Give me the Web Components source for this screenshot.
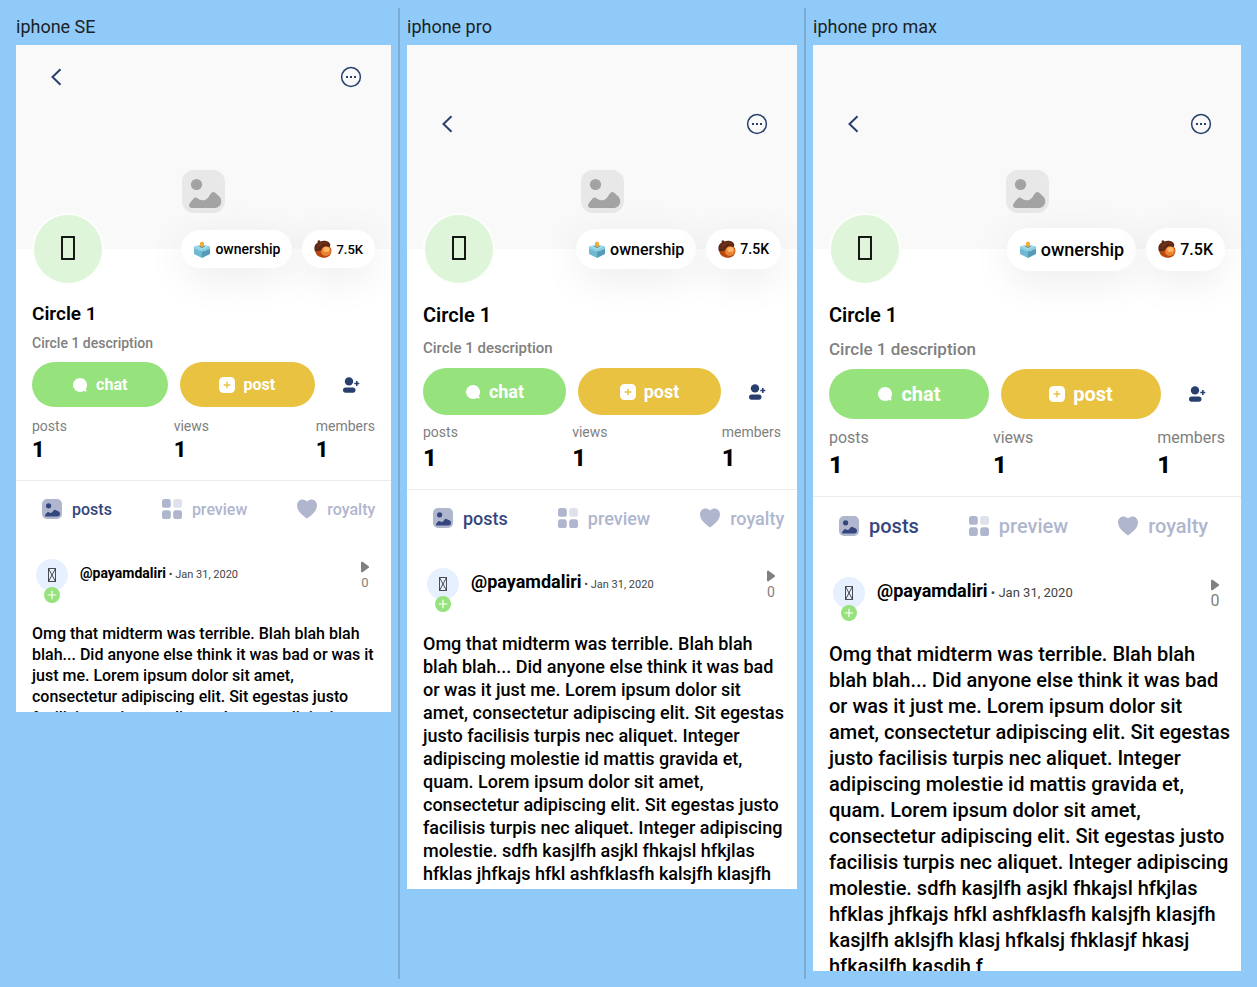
<!DOCTYPE html>
<html lang="en">
<head>
<meta charset="utf-8">
<meta name="viewport" content="width=device-width, initial-scale=1">
<title>Circle device previews</title>
<style>
  body { margin: 0; padding: 8px; background: #90caf9; font-family: Roboto, "Noto Sans", sans-serif; }
</style>
</head>
<body>
<device-board>
  <device-preview size="se" label="iphone SE"><circle-screen></circle-screen></device-preview>
  <device-preview size="pro" label="iphone pro"><circle-screen></circle-screen></device-preview>
  <device-preview size="max" label="iphone pro max"><circle-screen></circle-screen></device-preview>
</device-board>

<script>
const define = (name, html) => {
  const template = document.createElement('template');
  template.innerHTML = html;
  customElements.define(name, class extends HTMLElement {
    constructor() {
      super();
      this.attachShadow({ mode: 'open' }).append(template.content.cloneNode(true));
    }
    connectedCallback() {
      this.shadowRoot.querySelectorAll('[data-attr]').forEach(node => {
        node.textContent = this.getAttribute(node.dataset.attr) || '';
      });
      this.shadowRoot.querySelectorAll('button').forEach(node => {
        if (this.hasAttribute('label')) node.setAttribute('aria-label', this.getAttribute('label'));
      });
    }
  });
};

const ICONS = {
  back: [24, 24, '<path d="M16.500 4.300 8.500 12l8 7.700" fill="none" stroke="#29406f" stroke-width="2"/>'],
  more: [24, 24, '<circle cx="12" cy="12" r="9.400" fill="none" stroke="#29406f" stroke-width="1.500"/><path d="M7 11h2v2H7zM11 11h2v2h-2zM15 11h2v2h-2z" fill="#29406f"/>'],
  cover: [43, 43, '<rect width="43" height="43" rx="12" fill="#e8e8e8"/><circle cx="14.500" cy="14.500" r="5.600" fill="#a3a3a3"/><path d="M7 35.500c0-1.600 3.800-6.300 5.300-7.500 1.700-1.300 3 .3 4.700 1.300 2.800 1.700 6.300 1.500 9-1.600 1.600-1.900 2.400-4.100 4-5.200 1.800-1.200 3.400.3 5.500 2.500 2.500 1.600 4 4 3.700 7-.3 3.500-3 6-6.700 6H10c-2 0-3-.9-3-2.500z" fill="#a3a3a3"/>'],
  ballot: [18, 18, '<path d="m1 6.500 8-2.500 8 2.500-8 3.500z" fill="#9bdcec"/><path d="M1 6.500v7.500l8 4V10z" fill="#6fb9d0"/><path d="M17 6.500v7.500l-8 4V10z" fill="#559bb8"/><path d="M1 6.500 9 10l8-3.500v2L15 10l-1-.5-2 2-1-.7-2 1-2-1-1 .5-2-2-1 .5-2-1.300z" fill="#8bd0e3"/><path d="m6 6.400 3-1 3 1.100-3 1.300z" fill="#366477"/><path d="M7 3.300c0-2 4-2 4 0v3L9.200 7.200 7 6.200z" fill="#f0ab3e"/>'],
  acorn: [18, 18, '<path d="M2.500 8C.6 10 1.200 14.700 5 16.600c2.600 1.200 4.600 1.500 7 1 3.700-.8 5.600-3.900 5.400-7.200C17.200 6.700 14 5 11 5z" fill="#b8480f"/><ellipse cx="11.800" cy="11" rx="5" ry="4.900" fill="#ea8432"/><ellipse cx="12.400" cy="9.500" rx="3.200" ry="2.500" fill="#ffb563"/><path d="M1 11.500C-.6 7 1 4 3.800 2.600L3.500.8l2-.5 1 1.200C10-.2 15.700 1 16.200 4.700c.3 1.500-.2 2-1 2.300C11 5.200 8 7 7.300 10.500 5 10.200 2.600 11.500 1 11.500z" fill="#5c2714"/><path d="M3 6C6 3 10 2.400 13.500 3.500M3 9c1-3 3-4 5-4.500" fill="none" stroke="#8c421e" stroke-width=".7"/>'],
  chat: [16, 16, '<path d="M8 1a7 7 0 1 0 3.800 12.900l2.200.6c.6.100.8-.3.600-.8l-.7-1.900A7 7 0 0 0 8 1z" fill="#fff"/>'],
  add: [16, 16, '<path fill-rule="evenodd" d="M4.500 0h7A4.500 4.500 0 0 1 16 4.500v7a4.500 4.500 0 0 1-4.500 4.500h-7A4.500 4.500 0 0 1 0 11.500v-7A4.500 4.500 0 0 1 4.500 0zM7.300 4.700v2.600H4.700v1.400h2.600v2.600h1.400V8.700h2.600V7.300H8.700V4.700z" fill="#fff"/>'],
  follow: [18, 18, '<circle cx="7" cy="5.400" r="4.200" fill="#29406f"/><rect x="1" y="11.500" width="12.500" height="5.200" rx="2.600" fill="#29406f"/><path d="M14.800 5v5M12.300 7.500h5" stroke="#29406f" stroke-width="1.600"/>'],
  picture: [20, 20, '<rect width="20" height="20" rx="5" fill="#afb6ce"/><circle cx="6.600" cy="6.800" r="2.600" fill="#35457d"/><path d="M3 16.600c0-.9 1.900-3.100 2.800-3.600 1-.4 1.500.8 2.900.9 2.200.1 2.500-3.300 4.300-3.100.9.100 1.200 1 2 1 .9 0 2.800.8 3 2.800.2 1.800-.9 3-2.700 3H4.200c-.8 0-1.200-.3-1.200-1z" fill="#35457d"/>'],
  grid: [20, 20, '<g fill="#afb6ce"><rect width="8.800" height="8.800" rx="2.600"/><rect y="11.200" width="8.800" height="8.800" rx="2.600"/><rect x="11.200" y="11.200" width="8.800" height="8.800" rx="2.600"/><rect x="11.200" width="8.800" height="8.800" rx="2.600" opacity=".4"/></g>'],
  heart: [20, 20, '<path d="M10 19.500C8 18 0 13 0 6.600 0 3 2.300.5 5.500.5 7.400.5 9 1.500 10 2.500c1-1 2.600-2 4.500-2C17.700.5 20 3 20 6.600c0 6.400-8 11.400-10 12.900z" fill="#afb6ce"/>'],
  play: [10, 12, '<path d="M1 1.700C1 .7 2 .4 2.900.9l5.500 4c.9.700.9 1.500 0 2.200l-5.500 4C2 11.600 1 11.300 1 10.300z" fill="#808080"/>'],
  plus: [16, 16, '<circle cx="8" cy="8" r="8" fill="#96e27d"/><path d="M8 3.700v8.600M3.700 8h8.600" stroke="#fff" stroke-width="1.200"/>'],
  box: [16, 26, '<rect x="2" y="3" width="12" height="22" fill="none" stroke="#000" stroke-width="1.800"/>'],
  crossbox: [10, 16, '<path d="M1.500 1.500h7v13h-7zl7 13M8.500 1.500l-7 13" fill="none" stroke="#222" stroke-width=".8"/>']
};

customElements.define('app-icon', class extends HTMLElement {
  constructor() {
    super();
    this.attachShadow({ mode: 'open' });
  }
  connectedCallback() {
    const [w, h, body] = ICONS[this.getAttribute('name')];
    this.shadowRoot.innerHTML = `<style>:host{display:inline-flex;flex:none}svg{display:block}</style>
      <svg width="${w}" height="${h}" viewBox="0 0 ${w} ${h}" aria-hidden="true">${body}</svg>`;
  }
});

define('info-pill', `
<style>
  :host { display: flex; align-items: center; gap: 4px; height: var(--pill-h); padding: 0 12px; border-radius: 24px;
    background: #fff; color: #000; font-weight: 500; font-size: var(--pill-font); box-shadow: 0 10px 40px rgba(0,0,0,.08); white-space: nowrap; }
</style>
<slot name="icon"></slot><slot></slot>`);

define('action-button', `
<style>
  :host { display: block; }
  button { display: flex; align-items: center; justify-content: center; gap: 8px; width: 100%; height: var(--action-h);
    border: 0; border-radius: 25px; background: var(--fill); color: #fff; font: 700 var(--text) Roboto, sans-serif; padding: 0; }
</style>
<button type="button"><slot name="icon"></slot><span><slot></slot></span></button>`);

define('icon-button', `
<style>
  :host { display: flex; }
  button { display: flex; align-items: center; justify-content: center; width: 48px; height: 40px; padding: 0; border: 0; background: none; }
</style>
<button type="button"><slot></slot></button>`);

define('stat-item', `
<style>
  :host { display: block; }
  dl { margin: 0; }
  dt { font-size: var(--stat-font); line-height: var(--stat-line); color: #808080; }
  dd { margin: 0; font-size: var(--count-font); line-height: var(--count-line); font-weight: 800; color: #000; }
</style>
<dl><dt data-attr="label"></dt><dd><slot></slot></dd></dl>`);

define('tab-item', `
<style>
  :host { display: flex; flex: none; color: #afb6ce; }
  :host([active]) { color: #35457d; }
  button { display: flex; align-items: center; gap: 10px; padding: 0 10px; border: 0; background: none; color: inherit;
    font: 500 var(--text) Roboto, sans-serif; }
</style>
<button type="button"><slot name="icon"></slot><span><slot></slot></span></button>`);

define('post-card', `
<style>
  :host { display: block; padding: 22px 10px 0 16px; }
  header { display: flex; align-items: flex-start; height: 44px; padding: 0 11px 0 4px; }
  .avatar { position: relative; display: flex; align-items: center; justify-content: center; width: 32px; height: 32px;
    border-radius: 50%; background: #e6f0ff; }
  .avatar .badge { position: absolute; left: 8px; top: 28px; }
  .byline { flex: 1; margin-left: 12px; line-height: 28px; color: #444; font-size: var(--date-font); white-space: nowrap; }
  a { color: #000; font-weight: 700; font-size: var(--name-font); text-decoration: none; }
  .plays { display: flex; flex-direction: column; align-items: center; gap: 1px; padding-top: 2px; color: #808080;
    font-size: var(--plays-font); line-height: 18px; }
  p { margin: 20px 0 0; font-size: var(--text); line-height: var(--body-line); font-weight: 500; color: #000; }
</style>
<header>
  <span class="avatar"><app-icon name="crossbox"></app-icon><app-icon class="badge" name="plus"></app-icon></span>
  <span class="byline"><a href="#payamdaliri">@payamdaliri</a> • <time datetime="2020-01-31">Jan 31, 2020</time></span>
  <span class="plays"><app-icon name="play"></app-icon><span>0</span></span>
</header>
<p><slot></slot></p>`);

define('circle-screen', `
<style>
  :host { display: block; background: #fff; }
  .cover { display: flex; flex-direction: column; position: relative; height: 204px; box-sizing: border-box; padding-top: var(--safe-top); background: #f9f9f9; }
  nav { display: flex; justify-content: space-between; align-items: center; height: 64px; padding: 0 16px; }
  .cover-icon { position: absolute; left: 0; right: 0; bottom: 36px; display: flex; justify-content: center; }
  .identity { position: relative; display: flex; align-items: center; height: 72px; margin-top: -36px; padding: 0 16px; gap: 10px; }
  .avatar { display: flex; align-items: center; justify-content: center; width: 68px; height: 68px; margin: 0 auto 0 0;
    border: 2px solid #fcfffb; border-radius: 50%; background: #dff5d9; }
  .avatar app-icon { margin-bottom: 4px; }
  .details { padding: 14px 16px 15px; }
  h1 { margin: 0; font-size: var(--title-font); line-height: var(--title-line); font-weight: 600; color: #000; }
  .about { margin: 0; font-size: var(--about-font); line-height: var(--about-line); font-weight: 500; color: #808080; }
  .actions { display: grid; grid-template-columns: 1fr 1fr var(--aux); align-items: center; gap: 12px; height: var(--action-h); margin-top: var(--action-gap); }
  .stats { display: flex; justify-content: space-between; margin-top: var(--stat-gap); }
  .tabs { display: flex; gap: 30px; height: var(--tabs-h); padding-left: 16px; border-top: 1px solid #ebebeb; overflow: hidden; }
</style>
<div class="cover">
  <nav>
    <icon-button label="Back"><app-icon name="back"></app-icon></icon-button>
    <icon-button label="More"><app-icon name="more"></app-icon></icon-button>
  </nav>
  <div class="cover-icon"><app-icon name="cover"></app-icon></div>
</div>
<div class="identity">
  <span class="avatar"><app-icon name="box"></app-icon></span>
  <info-pill><app-icon slot="icon" name="ballot"></app-icon>ownership</info-pill>
  <info-pill style="--pill-font:var(--score-font)"><app-icon slot="icon" name="acorn"></app-icon>7.5K</info-pill>
</div>
<section class="details">
  <h1>Circle 1</h1>
  <p class="about">Circle 1 description</p>
  <div class="actions">
    <action-button style="--fill:#96e27d"><app-icon slot="icon" name="chat"></app-icon>chat</action-button>
    <action-button style="--fill:#e8c240"><app-icon slot="icon" name="add"></app-icon>post</action-button>
    <icon-button label="Add member"><app-icon name="follow"></app-icon></icon-button>
  </div>
  <div class="stats">
    <stat-item label="posts">1</stat-item>
    <stat-item label="views">1</stat-item>
    <stat-item label="members">1</stat-item>
  </div>
</section>
<div class="tabs">
  <tab-item active><app-icon slot="icon" name="picture"></app-icon>posts</tab-item>
  <tab-item><app-icon slot="icon" name="grid"></app-icon>preview</tab-item>
  <tab-item><app-icon slot="icon" name="heart"></app-icon>royalty</tab-item>
</div>
<post-card>Omg that midterm was terrible. Blah blah blah blah... Did anyone else think it was bad or was it just me. Lorem ipsum dolor sit amet, consectetur adipiscing elit. Sit egestas justo facilisis turpis nec aliquet. Integer adipiscing molestie id mattis gravida et, quam. Lorem ipsum dolor sit amet, consectetur adipiscing elit. Sit egestas justo facilisis turpis nec aliquet. Integer adipiscing molestie. sdfh kasjlfh asjkl fhkajsl hfkjlas hfklas jhfkajs hfkl ashfklasfh kalsjfh klasjfh kasjlfh aklsjfh klasj hfkalsj fhklasjf hkasj hfkasjlfh kasdjh f</post-card>`);

define('device-preview', `
<style>
  :host { display: block; padding: 8px; min-width: 0; }
  :host([size="se"]) {
    --ratio: 375 / 667; --safe-top: 0px; --text: 16px;
    --pill-h: 38px; --pill-font: 14px; --score-font: 13px;
    --title-font: 19px; --title-line: 30px; --about-font: 14px; --about-line: 28px;
    --action-h: 45px; --action-gap: 5px; --aux: 48px;
    --stat-gap: 10px; --stat-font: 14px; --stat-line: 18px; --count-font: 22px; --count-line: 30px;
    --tabs-h: 56px; --name-font: 14px; --date-font: 11px; --plays-font: 13px; --body-line: 21px;
  }
  :host([size="pro"]) {
    --ratio: 390 / 844; --safe-top: 47px; --text: 18px;
    --pill-h: 40px; --pill-font: 16px; --score-font: 14px;
    --title-font: 20px; --title-line: 32px; --about-font: 15px; --about-line: 34px;
    --action-h: 47px; --action-gap: 3px; --aux: 48px;
    --stat-gap: 7px; --stat-font: 14px; --stat-line: 20px; --count-font: 24px; --count-line: 32px;
    --tabs-h: 56px; --name-font: 18px; --date-font: 11px; --plays-font: 14px; --body-line: 23px;
  }
  :host([size="max"]) {
    --ratio: 428 / 926; --safe-top: 47px; --text: 20px;
    --pill-h: 43px; --pill-font: 18px; --score-font: 16px;
    --title-font: 20px; --title-line: 32px; --about-font: 17px; --about-line: 36px;
    --action-h: 50px; --action-gap: 2px; --aux: 52px;
    --stat-gap: 8px; --stat-font: 16px; --stat-line: 22px; --count-font: 24px; --count-line: 32px;
    --tabs-h: 58px; --name-font: 18px; --date-font: 13px; --plays-font: 16px; --body-line: 26px;
  }
  h2 { margin: 0 0 8px; font-size: 18px; line-height: 21px; font-weight: 400; color: #1b2226; }
  .screen { aspect-ratio: var(--ratio); overflow: hidden; background: #fff; }
</style>
<h2 data-attr="label"></h2>
<div class="screen"><slot></slot></div>`);

define('device-board', `
<style>
  :host { display: grid; grid-template-columns: 391fr 406fr 444fr; }
  ::slotted(device-preview) { box-shadow: inset -1px 0 #7aabd3, inset 1px 0 #7aabd3; }
  ::slotted(device-preview:first-child) { box-shadow: inset -1px 0 #7aabd3; }
  ::slotted(device-preview:last-child) { box-shadow: inset 1px 0 #7aabd3; }
</style>
<slot></slot>`);
</script>
</body>
</html>
